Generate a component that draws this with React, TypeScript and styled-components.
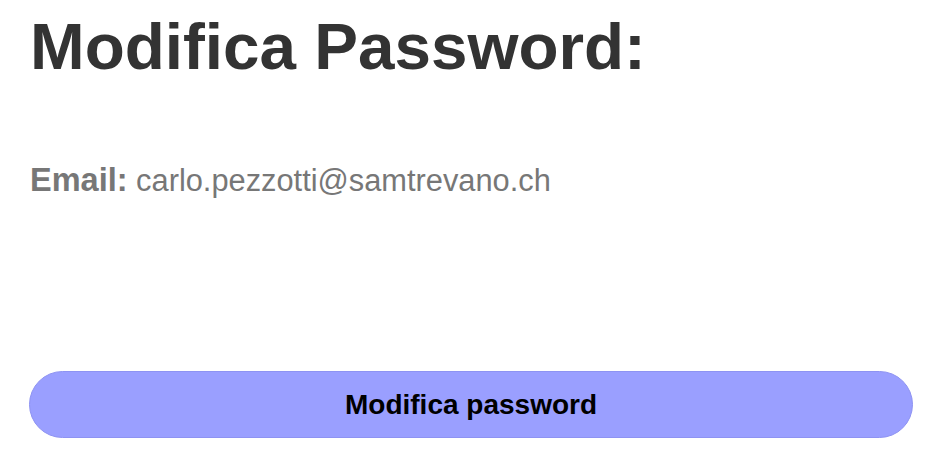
import React from 'react';
import styled, { createGlobalStyle } from 'styled-components';

const GlobalStyle = createGlobalStyle`
  html, body {
    margin: 0;
    padding: 0;
    background: #ffffff;
    font-family: 'Liberation Sans', Arial, sans-serif;
  }
`;

const Page = styled.div`
  display: flex;
  flex-direction: column;
  width: 939px;
  height: 460px;
  padding: 0 26px 0 29px;
  box-sizing: border-box;
`;

const Title = styled.h1`
  margin: 9px 0 0 1px;
  font-size: 65.6px;
  line-height: 75px;
  font-weight: 700;
  color: #333333;
`;

const InfoRow = styled.p`
  margin: 79px 0 0 1px;
  font-size: 30.8px;
  line-height: 34px;
  color: #777777;
`;

const Label = styled.strong`
  font-size: 32.5px;
  font-weight: 700;
`;

const SubmitButton = styled.button`
  margin-top: 173px;
  height: 67px;
  width: 100%;
  border: 1px solid #8e93f2;
  border-radius: 34px;
  background-color: #9a9fff;
  color: #000000;
  font-family: 'Liberation Sans', Arial, sans-serif;
  font-size: 28px;
  font-weight: 700;
  cursor: pointer;
`;

export default function App() {
  return (
    <>
      <GlobalStyle />
      <Page>
        <Title>Modifica Password:</Title>
        <InfoRow>
          <Label>Email:</Label> carlo.pezzotti@samtrevano.ch
        </InfoRow>
        <SubmitButton type='button'>Modifica password</SubmitButton>
      </Page>
    </>
  );
}
